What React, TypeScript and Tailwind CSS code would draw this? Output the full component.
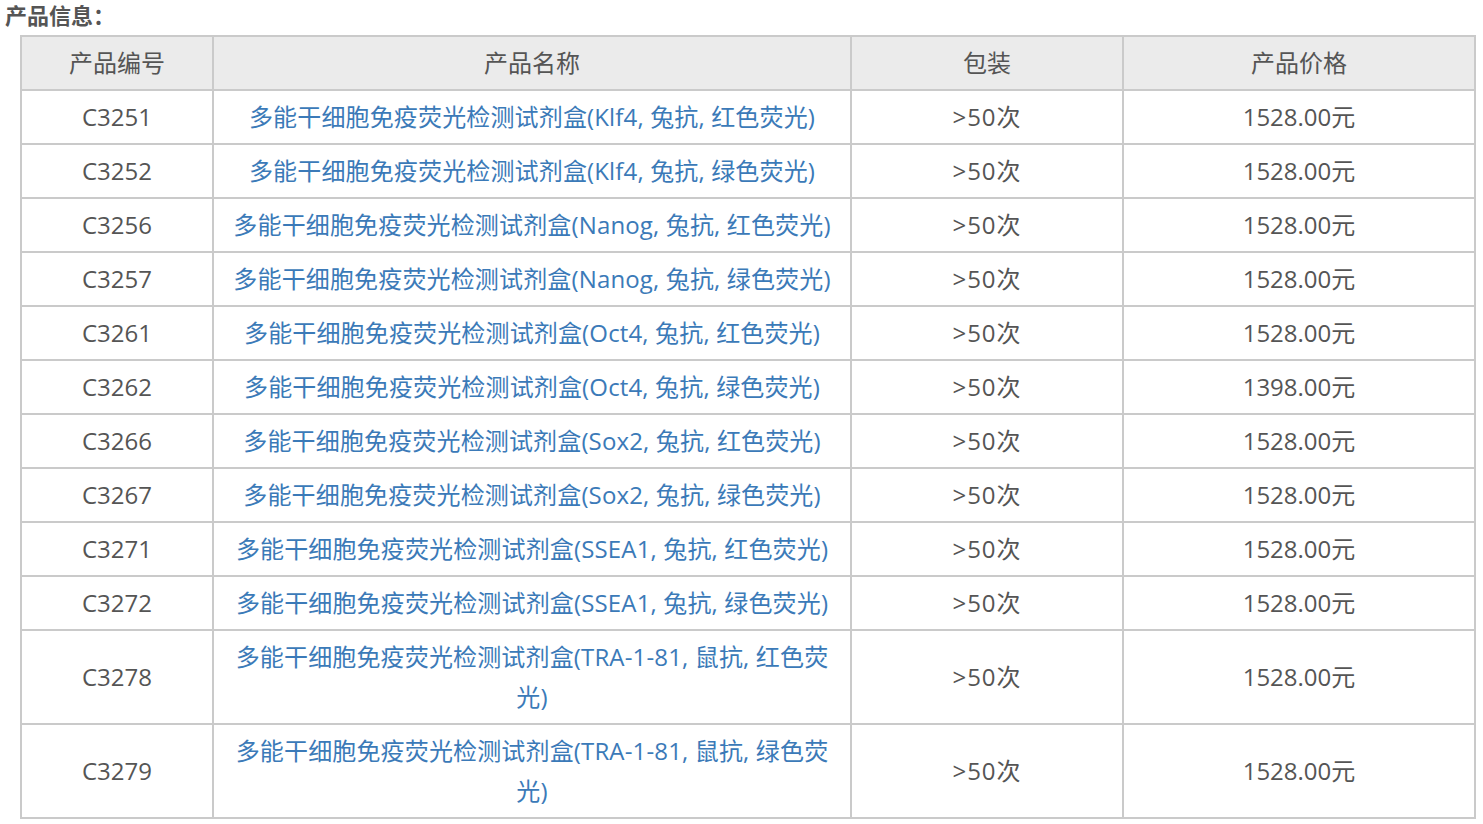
const ROWS: { code: string; name: string; pack: string; price: string }[] = [
  { code: "C3251", name: "多能干细胞免疫荧光检测试剂盒(Klf4, 兔抗, 红色荧光)", pack: ">50次", price: "1528.00元" },
  { code: "C3252", name: "多能干细胞免疫荧光检测试剂盒(Klf4, 兔抗, 绿色荧光)", pack: ">50次", price: "1528.00元" },
  { code: "C3256", name: "多能干细胞免疫荧光检测试剂盒(Nanog, 兔抗, 红色荧光)", pack: ">50次", price: "1528.00元" },
  { code: "C3257", name: "多能干细胞免疫荧光检测试剂盒(Nanog, 兔抗, 绿色荧光)", pack: ">50次", price: "1528.00元" },
  { code: "C3261", name: "多能干细胞免疫荧光检测试剂盒(Oct4, 兔抗, 红色荧光)", pack: ">50次", price: "1528.00元" },
  { code: "C3262", name: "多能干细胞免疫荧光检测试剂盒(Oct4, 兔抗, 绿色荧光)", pack: ">50次", price: "1398.00元" },
  { code: "C3266", name: "多能干细胞免疫荧光检测试剂盒(Sox2, 兔抗, 红色荧光)", pack: ">50次", price: "1528.00元" },
  { code: "C3267", name: "多能干细胞免疫荧光检测试剂盒(Sox2, 兔抗, 绿色荧光)", pack: ">50次", price: "1528.00元" },
  { code: "C3271", name: "多能干细胞免疫荧光检测试剂盒(SSEA1, 兔抗, 红色荧光)", pack: ">50次", price: "1528.00元" },
  { code: "C3272", name: "多能干细胞免疫荧光检测试剂盒(SSEA1, 兔抗, 绿色荧光)", pack: ">50次", price: "1528.00元" },
  { code: "C3278", name: "多能干细胞免疫荧光检测试剂盒(TRA-1-81, 鼠抗, 红色荧光)", pack: ">50次", price: "1528.00元" },
  { code: "C3279", name: "多能干细胞免疫荧光检测试剂盒(TRA-1-81, 鼠抗, 绿色荧光)", pack: ">50次", price: "1528.00元" },
];

const cell = "border-2 border-[#cacaca] px-[10px] py-[6px] text-center align-middle leading-[40px]";

export default function App() {
  return (
    <div
      className="min-h-screen bg-white pl-[5px] text-[#555555]"
      style={{ fontFamily: '"Open Sans", "Noto Sans CJK SC", sans-serif' }}
    >
      <div className="mb-[5px] text-[22px] font-bold leading-[30px] text-[#555555]">产品信息：</div>
      <table className="ml-[15px] table-fixed border-collapse text-[24px]" style={{ width: 1454 }}>
        <colgroup>
          <col className="w-[192px]" />
          <col className="w-[638px]" />
          <col className="w-[272px]" />
          <col className="w-[352px]" />
        </colgroup>
        <thead>
          <tr className="bg-[#ebebeb]">
            <th className={cell + " font-normal"}>产品编号</th>
            <th className={cell + " font-normal"}>产品名称</th>
            <th className={cell + " font-normal"}>包装</th>
            <th className={cell + " font-normal"}>产品价格</th>
          </tr>
        </thead>
        <tbody>
          {ROWS.map((r) => (
            <tr key={r.code}>
              <td className={cell}>{r.code}</td>
              <td className={cell + " tracking-[0.15px] text-[#3b7ab8]"}>{r.name}</td>
              <td className={cell + " tracking-[1px]"}>{r.pack}</td>
              <td className={cell}>{r.price}</td>
            </tr>
          ))}
        </tbody>
      </table>
    </div>
  );
}
